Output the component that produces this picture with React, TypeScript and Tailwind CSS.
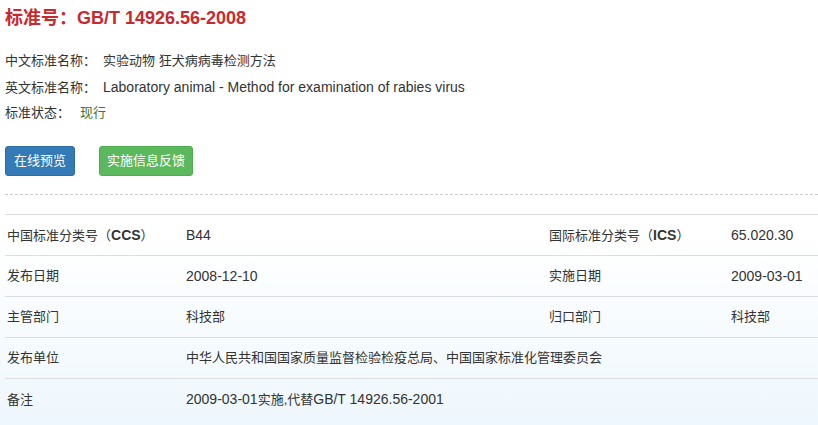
const Label = ({ code, prefix }: { code: string; prefix: string }) => (
  <span>
    {prefix}（<b className="font-bold text-[14px]">{code}</b>）
  </span>
);

// latin text in the reference renders a bit wider than the CJK run
const Lt = ({ children }: { children: React.ReactNode }) => <span className="text-[14px]">{children}</span>;

const Cell = ({ children, span }: { children?: React.ReactNode; span?: number }) => (
  <td colSpan={span} className="h-[41px] pl-[2px] align-middle border-t border-[#dddddd]">
    {children}
  </td>
);

export default function App() {
  return (
    <div
      className="min-h-screen bg-[linear-gradient(to_bottom,#ffffff_0%,#ffffff_55%,#eef7fd_100%)] pl-[5px] pt-[8px] text-[13px] text-[#333333]"
      style={{ fontFamily: '"Liberation Sans", Arial, "Noto Sans CJK SC", sans-serif' }}
    >
      <h1 className="text-[18px] leading-[20px] font-bold text-[#c9282d]">标准号：GB/T 14926.56-2008</h1>

      <div className="mt-[20px] leading-[26px]">
        <p className="h-[26px]">
          中文标准名称：<span className="ml-[7px]">实验动物 狂犬病病毒检测方法</span>
        </p>
        <p className="h-[26px]">
          英文标准名称：
          <span className="ml-[7px]">
            <Lt>Laboratory animal - Method for examination of rabies virus</Lt>
          </span>
        </p>
        <p className="h-[26px]">
          标准状态：<span className="ml-[10px] text-[#3c763d]">现行</span>
        </p>
      </div>

      <div className="mt-[20px] flex gap-[24px]">
        <button className="h-[30px] w-[70px] rounded-[3px] border border-[#2e6da4] bg-[#337ab7] text-[13px] text-white">
          在线预览
        </button>
        <button className="h-[30px] w-[94px] rounded-[3px] border border-[#4cae4c] bg-[#5cb85c] text-[13px] text-white">
          实施信息反馈
        </button>
      </div>

      <div className="mt-[18px] border-t border-dashed border-[#cccccc]" />

      <table className="mt-[19px] w-full border-collapse">
        <colgroup>
          <col className="w-[179px]" />
          <col className="w-[363px]" />
          <col className="w-[182px]" />
          <col />
        </colgroup>
        <tbody>
          <tr>
            <Cell><Label prefix="中国标准分类号" code="CCS" /></Cell>
            <Cell><Lt>B44</Lt></Cell>
            <Cell><Label prefix="国际标准分类号" code="ICS" /></Cell>
            <Cell><Lt>65.020.30</Lt></Cell>
          </tr>
          <tr>
            <Cell>发布日期</Cell>
            <Cell><Lt>2008-12-10</Lt></Cell>
            <Cell>实施日期</Cell>
            <Cell><Lt>2009-03-01</Lt></Cell>
          </tr>
          <tr>
            <Cell>主管部门</Cell>
            <Cell>科技部</Cell>
            <Cell>归口部门</Cell>
            <Cell>科技部</Cell>
          </tr>
          <tr>
            <Cell>发布单位</Cell>
            <Cell span={3}>中华人民共和国国家质量监督检验检疫总局、中国国家标准化管理委员会</Cell>
          </tr>
          <tr>
            <Cell>备注</Cell>
            <Cell span={3}>
              <Lt>2009-03-01</Lt>实施,代替<Lt>GB/T 14926.56-2001</Lt>
            </Cell>
          </tr>
        </tbody>
      </table>
    </div>
  );
}
